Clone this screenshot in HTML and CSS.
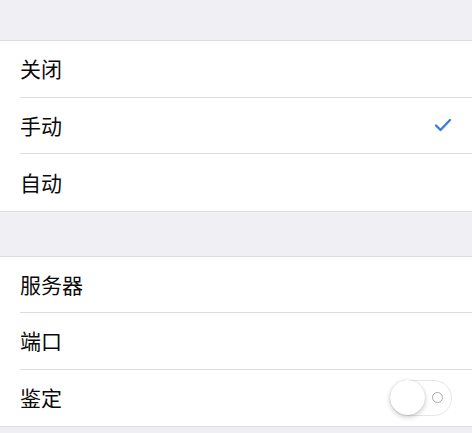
FILE: index.html
```html
<!DOCTYPE html>
<html>
  <head>
    <meta charset="UTF-8" />
    <meta name="viewport" content="width=device-width, initial-scale=1.0" />
    <title>代理设置</title>
    <link rel="stylesheet" href="styles.css">
  </head>

  <body>
    <div class="spacer top"></div>

    <div class="group">
      <div class="row">
        <span class="label">关闭</span>
      </div>
      <div class="row">
        <span class="label">手动</span>
        <svg class="check" width="18" height="14" viewBox="0 0 18 14">
          <path d="M2 7.5 L6.5 12 L16 2" fill="none" stroke="#3a7ae6" stroke-width="2.4" stroke-linecap="round" stroke-linejoin="round" />
        </svg>
      </div>
      <div class="row">
        <span class="label">自动</span>
      </div>
    </div>

    <div class="spacer"></div>

    <div class="group">
      <div class="row">
        <span class="label">服务器</span>
      </div>
      <div class="row">
        <span class="label">端口</span>
      </div>
      <div class="row">
        <span class="label">鉴定</span>
        <div class="switch">
          <div class="knob"></div>
          <div class="off-mark"></div>
        </div>
      </div>
    </div>

    <div class="spacer"></div>
  </body>
</html>
```

FILE: styles.css
```css
body {
  font-family: "Noto Sans CJK SC", "Noto Sans", sans-serif;
  margin: 0;
  background-color: #efeff4;
  color: #0a0a0a;
}

.spacer {
  height: 44px;
}

.spacer.top {
  height: 40px;
}

.group {
  background-color: #fff;
  border-top: 1px solid #dcdce0;
  border-bottom: 1px solid #dcdce0;
}

.row {
  display: flex;
  align-items: center;
  justify-content: space-between;
  height: 56.5px;
  box-sizing: border-box;
  margin-left: 20px;
  padding-right: 20px;
  border-bottom: 1px solid #dcdce0;
}

.row:last-child {
  border-bottom: none;
}

.label {
  font-size: 21px;
  line-height: 1;
}

.switch {
  position: relative;
  width: 62px;
  height: 36px;
  box-sizing: border-box;
  border: 1.5px solid #e6e6e8;
  border-radius: 18px;
  background-color: #fff;
}

.knob {
  position: absolute;
  left: -1px;
  top: -1px;
  width: 35px;
  height: 35px;
  border-radius: 50%;
  background-color: #fff;
  box-shadow: 0 2px 5px rgba(0, 0, 0, 0.22), 0 0 1px rgba(0, 0, 0, 0.2);
}

.off-mark {
  position: absolute;
  right: 8px;
  top: 11px;
  width: 9px;
  height: 9px;
  border: 1.5px solid #a8a8ac;
  border-radius: 50%;
}
```
